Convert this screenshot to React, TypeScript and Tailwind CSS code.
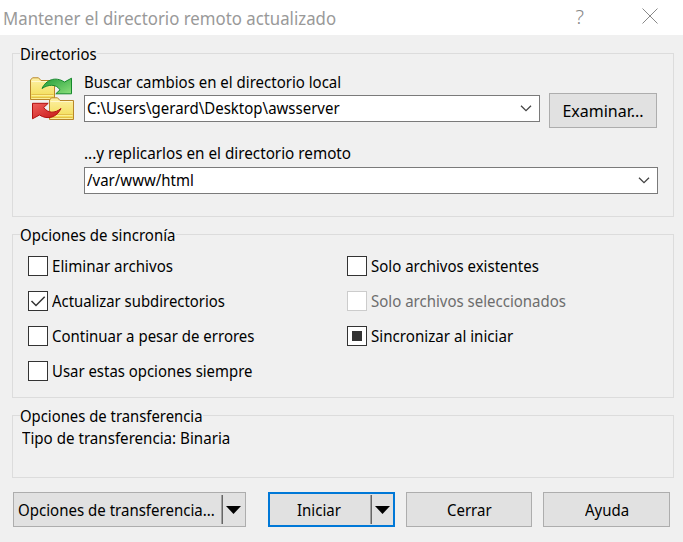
import React from "react";

// Condensed text run; `fit` carries the horizontal scale.
const T = ({ children, fit = "scale-x-[0.937]" }: { children: React.ReactNode; fit?: string }) => (
  <span className={`inline-block origin-left ${fit}`}>{children}</span>
);

const Chevron = () => (
  <svg className="mr-[7px] h-[7px] w-[12px] shrink-0" viewBox="0 0 12 7" fill="none">
    <path d="M1 0.8 L6 5.7 L11 0.8" stroke="#444" strokeWidth="1.3" />
  </svg>
);

const Combo = ({ value, className }: { value: string; className: string }) => (
  <div className={`flex h-[27px] items-center justify-between border border-[#7a7a7a] bg-white pl-[2px] ${className}`}>
    <span className="pb-[2px] leading-[20px]"><T>{value}</T></span>
    <Chevron />
  </div>
);

const Check = ({
  label,
  state = "off",
  disabled = false,
  fit,
}: {
  label: string;
  state?: "off" | "on" | "mixed";
  disabled?: boolean;
  fit?: string;
}) => (
  <label className={`flex h-[20px] items-center gap-[4px] ${disabled ? "text-[#6d6d6d]" : ""}`}>
    <span className={`flex h-[20px] w-[20px] shrink-0 items-center justify-center border bg-white ${disabled ? "border-[#cccccc]" : "border-[#333]"}`}>
      {state === "on" && (
        <svg className="h-[18px] w-[18px]" viewBox="0 0 18 18" fill="none">
          <path d="M2.5 9 L7 13.5 L15.7 4.7" stroke="#333" strokeWidth="1.5" />
        </svg>
      )}
      {state === "mixed" && <span className="h-[10px] w-[10px] bg-[#333]" />}
    </span>
    <T fit={fit}>{label}</T>
  </label>
);

const Arrow = () => (
  <svg className="h-[8px] w-[15px]" viewBox="0 0 15 8">
    <path d="M0 0 H15 L7.5 8 Z" fill="#000" />
  </svg>
);

const Folder = () => (
  <g stroke="#b8862a">
    <path d="M1.5 22.5 V3 L3.5 0.8 H9.5 L12 3.5 H25.5 V22.5 Z" fill="url(#fold)" />
    <path d="M2.5 4.5 H24.5" stroke="#fff8cc" />
    <path d="M2.5 17.5 H24.5 M2.5 20.5 H24.5" stroke="#e3c04a" />
    <path d="M2.5 18.5 H24.5 M2.5 21.5 H24.5" stroke="#fbef98" />
  </g>
);

const SyncIcon = () => (
  <svg className="h-[45px] w-[46px]" viewBox="0 0 46 45">
    <defs>
      <linearGradient id="fold" x1="0" y1="0" x2="0" y2="1">
        <stop offset="0" stopColor="#fdf0a6" />
        <stop offset="1" stopColor="#f2dc50" />
      </linearGradient>
      <linearGradient id="green" x1="0" y1="0" x2="1" y2="1">
        <stop offset="0" stopColor="#1f9a36" />
        <stop offset="1" stopColor="#8be07c" />
      </linearGradient>
      <linearGradient id="red" x1="0" y1="0" x2="1" y2="1">
        <stop offset="0" stopColor="#f0605c" />
        <stop offset="1" stopColor="#c41414" />
      </linearGradient>
    </defs>
    <Folder />
    <path d="M13 11.5 C17 3 26 -1 35.5 5 L42.5 1.2 V16.8 H26.8 L31 12.8 C27 6.5 19 7.5 13 11.5 Z" fill="url(#green)" stroke="#15882c" strokeLinejoin="round" />
    <g transform="translate(19 20)">
      <Folder />
    </g>
    <path d="M32 31.5 C28 40 19 43.5 10.5 38 L3.5 41.8 V26.3 H19.2 L14.7 30.5 C19 36.5 26 36.5 32 31.5 Z" fill="url(#red)" stroke="#b01010" strokeLinejoin="round" />
  </svg>
);

const groupClass = "mx-[12px] w-[662px] min-w-0 border border-[#dcdcdc]";
const legendClass = "ml-[7px] h-[21px] leading-[22px]";
const buttonClass = "flex h-[35px] items-center justify-center border border-[#adadad] bg-[#e1e1e1]";

export default function App() {
  return (
    <div className="h-[542px] w-[683px] overflow-hidden whitespace-nowrap bg-[#f0f0f0] font-['Noto_Sans',sans-serif] text-[16px] leading-[20px] text-black">
      <header className="flex h-[35px] items-center bg-white pl-[3px] text-[#999]">
        <h1 className="w-[340px] text-[18px]"><T fit="scale-x-[0.933]">Mantener el directorio remoto actualizado</T></h1>
        <span className="ml-auto mr-[58px] pb-[2px] text-[20px] font-light text-[#888]">?</span>
        <svg className="mb-[3px] mr-[25px] h-[16px] w-[16px]" viewBox="0 0 16 16">
          <path d="M0.5 0.5 L15.5 15.5 M15.5 0.5 L0.5 15.5" stroke="#888" />
        </svg>
      </header>
      <main className="flex flex-col pt-[8px]">
        <fieldset className={`${groupClass} h-[174px]`}>
          <legend className={`${legendClass} w-[77px]`}><T fit="scale-x-[0.93]">Directorios</T></legend>
          <div className="flex pl-[16px] pt-[8px]">
            <div className="mr-[9px] mt-[5px] w-[46px]"><SyncIcon /></div>
            <div className="flex flex-col">
              <span><T>Buscar cambios en el directorio local</T></span>
              <div className="flex">
                <Combo value="C:\Users\gerard\Desktop\awsserver" className="mt-[3px] w-[456px]" />
                <button className={`${buttonClass} ml-[9px] mt-px w-[108px]`}>Examinar...</button>
              </div>
              <span className="mt-[15px]"><T fit="scale-x-[0.953]">...y replicarlos en el directorio remoto</T></span>
              <Combo value="/var/www/html" className="mt-[4px] w-[574px]" />
            </div>
          </div>
        </fieldset>
        <fieldset className={`${groupClass} mt-[7px] h-[174px]`}>
          <legend className={`${legendClass} w-[156px]`}><T>Opciones de sincronía</T></legend>
          <div className="flex pl-[15px] pt-[11px]">
            <div className="flex w-[319px] flex-col gap-[15px]">
              <Check label="Eliminar archivos" fit="scale-x-[0.943]" />
              <Check label="Actualizar subdirectorios" state="on" fit="scale-x-[0.93]" />
              <Check label="Continuar a pesar de errores" />
              <Check label="Usar estas opciones siempre" fit="scale-x-[0.932]" />
            </div>
            <div className="flex flex-col gap-[15px]">
              <Check label="Solo archivos existentes" />
              <Check label="Solo archivos seleccionados" disabled />
              <Check label="Sincronizar al iniciar" state="mixed" fit="scale-x-[0.945]" />
            </div>
          </div>
        </fieldset>
        <fieldset className={`${groupClass} mt-[7px] h-[73px]`}>
          <legend className={`${legendClass} w-[183px]`}><T fit="scale-x-[0.928]">Opciones de transferencia</T></legend>
          <p className="pl-[9px] pt-[2px]"><T fit="scale-x-[0.945]">Tipo de transferencia: Binaria</T></p>
        </fieldset>
        <footer className="flex pl-[13px] pt-[14px]">
          <button className={`${buttonClass} w-[233px]`}>
            <span className="w-[207px] pl-[4px] text-left"><T fit="scale-x-[0.939]">Opciones de transferencia...</T></span>
            <span className="h-[29px] w-[2px] border-l border-[#a0a0a0] bg-[#666]" />
            <span className="flex flex-1 justify-center pr-[2px]"><Arrow /></span>
          </button>
          <button className="ml-[22px] flex h-[35px] w-[127px] items-center border-2 border-[#0078d7] bg-[#e1e1e1]">
            <span className="w-[100px] text-center"><T>Iniciar</T></span>
            <span className="h-[29px] w-[2px] border-l border-[#a0a0a0] bg-[#666]" />
            <span className="flex flex-1 justify-center pr-px"><Arrow /></span>
          </button>
          <button className={`${buttonClass} ml-[11px] w-[126px] pl-[3px]`}><T>Cerrar</T></button>
          <button className={`${buttonClass} ml-[11px] w-[127px] pl-[4px]`}><T>Ayuda</T></button>
        </footer>
      </main>
    </div>
  );
}
